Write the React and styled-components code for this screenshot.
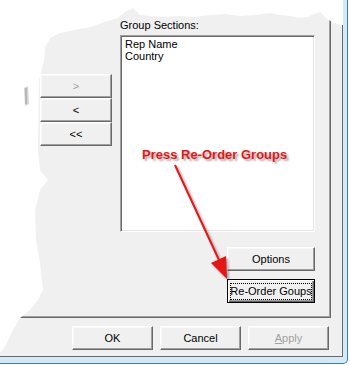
import React from "react";
import styled, { createGlobalStyle } from "styled-components";

const GlobalStyle = createGlobalStyle`
  body {
    margin: 0;
    background: #fff;
  }
`;

const Window = styled.div`
  position: relative;
  width: 350px;
  height: 365px;
  overflow: hidden;
  background: #fff;
  font-family: "Liberation Sans", Arial, sans-serif;
  font-size: 11px;
  color: #000;
`;

const Frame = styled.div`
  width: 347px;
  height: 363px;
  background: #d3eaf9;
  border-right: 1px solid #3f7fae;
  border-bottom: 1px solid #3f7fae;
  border-bottom-right-radius: 5px;
`;

const Dialog = styled.div`
  width: 342px;
  height: 356px;
  background: #f0f0f0;
  border-right: 1px solid #696969;
  border-bottom: 1px solid #696969;
  display: flex;
  flex-direction: column;
`;

const TabPanel = styled.div`
  box-sizing: border-box;
  margin: 4px 0 0 4px;
  width: 327px;
  height: 314px;
  border-top: 1px solid #fff;
  border-left: 1px solid #fff;
  border-right: 1px solid #696969;
  border-bottom: 1px solid #696969;
  box-shadow: inset -1px -1px #a0a0a0;
  padding: 14px 0 0 35px;
  display: flex;
  align-items: flex-start;
  gap: 8px;
`;

const MoveColumn = styled.div`
  margin-top: 55px;
  width: 72px;
  display: flex;
  flex-direction: column;
`;

const GroupColumn = styled.div`
  width: 195px;
  display: flex;
  flex-direction: column;
`;

const Label = styled.div`
  height: 13px;
  line-height: 13px;
`;

const ListBox = styled.div`
  box-sizing: border-box;
  margin-top: 3px;
  height: 197px;
  background: #fff;
  border-top: 1px solid #a0a0a0;
  border-left: 1px solid #a0a0a0;
  border-right: 1px solid #fff;
  border-bottom: 1px solid #fff;
  box-shadow: inset 1px 1px #696969, inset -1px -1px #e3e3e3;
  padding: 2px 4px;
`;

const ListItem = styled.div`
  line-height: 12px;
  white-space: nowrap;
`;

const Button = styled.button`
  box-sizing: border-box;
  width: ${(p) => p.$width || 81}px;
  height: ${(p) => p.$height || 24}px;
  margin: 0;
  padding: 0;
  background: #f0f0f0;
  font-family: inherit;
  font-size: 11px;
  color: ${(p) => (p.$dim ? "#a0a0a0" : "#000")};
  border-top: 1px solid #fff;
  border-left: 1px solid #fff;
  border-right: 1px solid #696969;
  border-bottom: 1px solid #696969;
  box-shadow: inset -1px -1px #a0a0a0, inset 1px 1px #f8f8f8;
  display: flex;
  align-items: center;
  justify-content: center;
`;

const DefaultButton = styled(Button)`
  border: 1px solid #000;
  box-shadow: inset 1px 1px #fff, inset -1px -1px #696969, inset -2px -2px #a0a0a0;
`;

const FocusRect = styled.span`
  display: flex;
  align-items: center;
  justify-content: center;
  box-sizing: border-box;
  width: 82px;
  height: 17px;
  border: 1px dotted #000;
  white-space: nowrap;
`;

const SideButtons = styled.div`
  align-self: flex-end;
  display: flex;
  flex-direction: column;
  gap: 8px;
  margin-top: 15px;
`;

const ButtonRow = styled.div`
  display: flex;
  justify-content: flex-end;
  gap: 7px;
  margin-top: 8px;
  padding-right: 13px;
`;

const Underline = styled.span`
  text-decoration: underline;
`;

const Overlay = styled.svg`
  position: absolute;
  left: 0;
  top: 0;
  pointer-events: none;
`;

const Callout = styled.div`
  position: absolute;
  left: 142px;
  top: 147px;
  font-family: "Liberation Sans", Arial, sans-serif;
  font-size: 13px;
  font-weight: bold;
  line-height: 15px;
  color: #e51515;
  white-space: nowrap;
  text-shadow: 2px 2px 2px rgba(0, 0, 0, 0.35);
`;

const torn =
  "M343,0 L343,25 L338,24 L332,22 L326,18 L320,12 L314,14 L308,17 L300,18 L290,16 L280,15 L270,13 L255,15 L240,16 L225,14 L210,15 L195,17 L180,16 L165,17 L150,16 L140,15 L133,8 L125,12 L118,18 L105,22 L90,27 L75,30 L60,33 L50,38 L45,48 L44,60 L41,72 L39,80 L38,150 L40,170 L48,180 L40,190 L35,210 L36,240 L40,262 L43,290 L38,300 L30,310 L20,318 L13,330 L6,345 L1,352 L0,352 L0,0 Z";

export default function App() {
  return (
    <>
      <GlobalStyle />
      <Window>
        <Frame>
          <Dialog>
            <TabPanel>
              <MoveColumn>
                <Button $width={72} $dim>&gt;</Button>
                <Button $width={72}>&lt;</Button>
                <Button $width={72}>&lt;&lt;</Button>
              </MoveColumn>
              <GroupColumn>
                <Label>Group Sections:</Label>
                <ListBox>
                  <ListItem>Rep Name</ListItem>
                  <ListItem>Country</ListItem>
                </ListBox>
                <SideButtons>
                  <Button $width={88}>Options</Button>
                  <DefaultButton $width={88}>
                    <FocusRect>Re-Order Goups</FocusRect>
                  </DefaultButton>
                </SideButtons>
              </GroupColumn>
            </TabPanel>
            <ButtonRow>
              <Button>OK</Button>
              <Button>Cancel</Button>
              <Button $dim>
                <Underline>A</Underline>pply
              </Button>
            </ButtonRow>
          </Dialog>
        </Frame>

        <Overlay width="350" height="365" viewBox="0 0 350 365">
          <path d={torn} fill="#fff" />
          <path d="M24,88 L28,86 L29,104 L25,106 Z" fill="#d6d6d6" />
          <path d="M26,88 L26,104" stroke="#9a9a9a" strokeWidth="1" />
        </Overlay>

        <Callout>Press Re-Order Groups</Callout>

        <Overlay width="350" height="365" viewBox="0 0 350 365">
          <defs>
            <filter id="shade" x="-20%" y="-20%" width="140%" height="140%">
              <feDropShadow dx="2" dy="2" stdDeviation="1.2" floodColor="#000" floodOpacity="0.35" />
            </filter>
          </defs>
          <g filter="url(#shade)">
            <line x1="175" y1="165" x2="219" y2="260" stroke="#e51515" strokeWidth="2" />
            <polygon points="211,263 226,256 227,279" fill="#e51515" />
          </g>
        </Overlay>
      </Window>
    </>
  );
}
